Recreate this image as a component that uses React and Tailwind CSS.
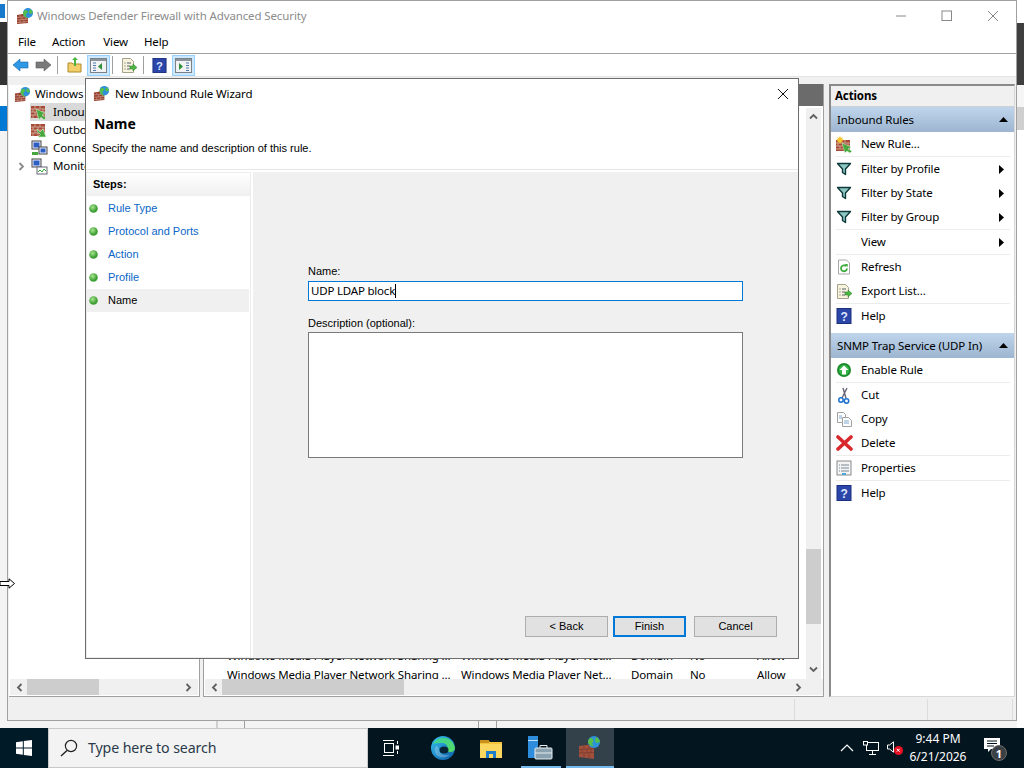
import React from "react";

const WallGlobe = ({ s = 18 }) => (
  <svg width={s} height={s} viewBox="0 0 18 18" className="shrink-0">
    <path d="M1 8l11-2v10l-11 1z" fill="#96412f" />
    <path d="M1 10.5l11-1M1 13l11-1M1 15.5l11-1M4 8v2M8 7v3M6 10v3M10 10v3M4 13v3M8 12v4" stroke="#c9907f" strokeWidth="0.8" />
    <circle cx="12" cy="6" r="5" fill="#2f8fdc" />
    <path d="M9 3c2 0 3 1 3 2s-2 1-2 3 1 2 2 3c-2 0-5-2-5-5 0-1 1-2 2-3zM14 2c1 1 3 2 3 4l-3 1-1-2z" fill="#52c04a" />
  </svg>
);
const WallArrow = ({ out }) => (
  <svg width="17" height="17" viewBox="0 0 17 17" className="shrink-0">
    <rect x="0" y="2" width="14" height="12" fill="#a64a36" />
    <path d="M0 5h14M0 8h14M0 11h14M4 2v3M9 2v3M2 5v3M7 5v3M12 5v3M4 8v3M9 8v3M2 11v3M7 11v3M12 11v3" stroke="#d9b7a6" strokeWidth="0.8" />
    {out ? (
      <path d="M6 7l3 3 3-3 3 8-8 0 2.500-2.500L6 9.500z" fill="#46a83c" stroke="#d7f0d0" strokeWidth="0.6" />
    ) : (
      <path d="M5 5l9 4-3 2 4 3-2 2-3-3-2 3z" fill="#46a83c" stroke="#d7f0d0" strokeWidth="0.6" />
    )}
  </svg>
);
const Computers = ({ chart }) => (
  <svg width="17" height="17" viewBox="0 0 17 17" className="shrink-0">
    <rect x="1" y="1" width="9" height="8" fill="#eef" stroke="#444" />
    <rect x="2.5" y="2.5" width="6" height="5" fill="#2c5fc4" />
    {chart ? (
      <>
        <rect x="6" y="9" width="10" height="7" fill="#fff" stroke="#667" />
        <path d="M7 14l2-2 2 2 2-3 2 2" stroke="#3aa63a" fill="none" />
      </>
    ) : (
      <>
        <rect x="8" y="7" width="8" height="7" fill="#eef" stroke="#444" />
        <rect x="9.5" y="8.5" width="5" height="4" fill="#2c5fc4" />
        <rect x="1" y="12" width="6" height="3" fill="#46a83c" />
      </>
    )}
  </svg>
);
const Funnel = () => (
  <svg width="16" height="16" viewBox="0 0 16 16" className="shrink-0">
    <path d="M1.500 2.500h13L9.500 8v5.500l-3-2V8z" fill="#8fc7c4" stroke="#0d3b3b" strokeWidth="1.4" strokeLinejoin="round" />
  </svg>
);
const HelpIcon = ({ s = 16 }) => (
  <svg width={s} height={s} viewBox="0 0 16 16" className="shrink-0">
    <rect x="1" y="0.5" width="14" height="15" fill="#2b46a8" stroke="#1c2f7d" />
    <text x="8" y="12.5" textAnchor="middle" fontSize="12" fontWeight="700" fontFamily="Liberation Sans" fill="#dfe7ff">?</text>
  </svg>
);
const ExportIcon = () => (
  <svg width="17" height="17" viewBox="0 0 17 17" className="shrink-0">
    <path d="M1.5 1.5h8l3 3v11h-11z" fill="#f7f3dc" stroke="#a6a28a" />
    <path d="M3.5 6h1M6 6h4M3.5 9h1M6 9h3M3.5 12h1M6 12h3" stroke="#55606d" />
    <path d="M9 9h3V7l4 3.5-4 3.5v-2H9z" fill="#4ab540" stroke="#2c7d2a" strokeWidth="0.5" />
  </svg>
);
const RefreshIcon = () => (
  <svg width="16" height="16" viewBox="0 0 16 16" className="shrink-0">
    <path d="M2.5 1h8l3 3v11h-11z" fill="#fff" stroke="#a8a8a8" />
    <path d="M11 9.5a3 3 0 1 1-1-2.4" fill="none" stroke="#3aaa3a" strokeWidth="1.8" />
    <path d="M8.5 5h3.2v3.2z" fill="#3aaa3a" />
  </svg>
);
const NewRuleIcon = () => (
  <svg width="17" height="17" viewBox="0 0 17 17" className="shrink-0">
    <rect x="0" y="4" width="14" height="11" fill="#a64a36" />
    <path d="M0 7h14M0 10h14M0 13h14M4 4v3M9 4v3M2 7v3M7 7v3M12 7v3M4 10v3M9 10v3" stroke="#d9b7a6" strokeWidth="0.8" />
    <path d="M4 0l1 2 2-1-1 2 2 1-2 1 1 2-2-1-1 2-1-2-2 1 1-2-2-1 2-1-1-2 2 1z" fill="#f4c431" />
    <path d="M6 7l9 4-3 2 4 2-2 2-3-2-2 2z" fill="#46a83c" stroke="#d7f0d0" strokeWidth="0.5" />
  </svg>
);
const EnableIcon = () => (
  <svg width="16" height="16" viewBox="0 0 16 16" className="shrink-0">
    <circle cx="8" cy="8" r="7" fill="#1b8a2b" />
    <circle cx="8" cy="8" r="5.2" fill="#37b34a" />
    <path d="M8 3.5L12.5 8H10v4.5H6V8H3.5z" fill="#fff" />
  </svg>
);
const CutIcon = () => (
  <svg width="16" height="17" viewBox="0 0 16 17" className="shrink-0">
    <path d="M11 1L6 11M7 1l3 10" stroke="#667" strokeWidth="1.4" fill="none" />
    <circle cx="5" cy="13" r="2.2" fill="none" stroke="#1c6fd0" strokeWidth="1.5" />
    <circle cx="10.5" cy="14" r="2.2" fill="none" stroke="#1c6fd0" strokeWidth="1.5" />
  </svg>
);
const CopyIcon = () => (
  <svg width="17" height="17" viewBox="0 0 17 17" className="shrink-0">
    <path d="M1.5 1.5h6l2 2v8h-8z" fill="#fff" stroke="#a0a0a0" />
    <path d="M6.5 6.5h6l3 3v6h-9z" fill="#fff" stroke="#a0a0a0" />
    <path d="M8 10h5M8 12h5M3 5h3M3 7h3" stroke="#7fa8d0" />
  </svg>
);
const DeleteIcon = () => (
  <svg width="17" height="16" viewBox="0 0 17 16" className="shrink-0">
    <path d="M2 2l13 12M15 2L2 14" stroke="#d8282c" strokeWidth="3.6" strokeLinecap="round" />
  </svg>
);
const PropsIcon = () => (
  <svg width="16" height="16" viewBox="0 0 16 16" className="shrink-0">
    <rect x="1" y="1" width="14" height="14" fill="#f4f4f4" stroke="#8a8a8a" />
    <path d="M3 5h1M5 5h8M3 8h1M5 8h8M3 11h1M5 11h8" stroke="#7b8794" />
    <rect x="6" y="13" width="4" height="2" fill="#4aa8e0" />
  </svg>
);
const ChevL = ({ c = "#606060" }) => (
  <svg width="9" height="9" viewBox="0 0 9 9"><path d="M6.5 1L3 4.5 6.5 8" fill="none" stroke={c} strokeWidth="1.8" /></svg>
);
const ChevR = ({ c = "#606060" }) => (
  <svg width="9" height="9" viewBox="0 0 9 9"><path d="M2.5 1L6 4.5 2.5 8" fill="none" stroke={c} strokeWidth="1.8" /></svg>
);
const ChevU = () => (
  <svg width="9" height="9" viewBox="0 0 9 9"><path d="M1 6.5L4.5 3 8 6.5" fill="none" stroke="#606060" strokeWidth="1.8" /></svg>
);
const ChevD = () => (
  <svg width="9" height="9" viewBox="0 0 9 9"><path d="M1 2.5L4.5 6 8 2.5" fill="none" stroke="#606060" strokeWidth="1.8" /></svg>
);
const TriR = () => (
  <svg width="5" height="9" viewBox="0 0 5 9"><path d="M0 0l5 4.5L0 9z" fill="#000" /></svg>
);
const TriU = () => (
  <svg width="9" height="5" viewBox="0 0 9 5"><path d="M0 5l4.5-5L9 5z" fill="#000" /></svg>
);

const Action = ({ icon, label, sub }) => (
  <div className="h-6 flex items-center text-black shrink-0">
    <div className="w-[30px] pl-[5px] flex items-center shrink-0">{icon}</div>
    <span className="-mt-px">{label}</span>
    {sub && <div className="ml-auto mr-[10px] flex"><TriR /></div>}
  </div>
);
const Sep = () => <div className="h-px bg-[#ececec] mx-[5px] w-[174px] shrink-0" />;
const ActHead = ({ label }) => (
  <div className="h-[25px] shrink-0 flex items-center pl-[6px] pr-[5px] bg-gradient-to-b from-[#bfd5ec] to-[#9db5d0] text-black">
    <span>{label}</span>
    <div className="ml-auto flex mr-[1px]"><TriU /></div>
  </div>
);
const TreeRow = ({ icon, label, arrow, pad = "pl-[22px]", w = "w-[22px]" }) => (
  <div className={`h-[18px] flex items-center ${pad}`}>
    {arrow && <div className="absolute left-[8px] flex"><ChevR c="#8a8a8a" /></div>}
    <div className={`${w} flex items-center shrink-0`}>{icon}</div>
    <span className="whitespace-nowrap">{label}</span>
  </div>
);
const ListRow = () => (
  <div className="h-[19px] flex items-center shrink-0 whitespace-nowrap text-black">
    <span className="w-[257px] pl-[23px] shrink-0">Windows Media Player Network Sharing ...</span>
    <span className="w-[170px] shrink-0">Windows Media Player Net...</span>
    <span className="w-[59px] shrink-0">Domain</span>
    <span className="w-[67px] shrink-0">No</span>
    <span>Allow</span>
  </div>
);
const TB = ({ children, active, ml = "" }) => (
  <div className={`h-[21px] w-[23px] shrink-0 flex items-center justify-center ${ml} ${active ? "bg-[#cce8ff] border border-[#99d1ff]" : ""}`}>{children}</div>
);
const TSep = () => <div className="w-px h-[18px] bg-[#a0a0a0] mx-[2px] shrink-0" />;
const Step = ({ label, on }) => (
  <div className={`h-[23px] flex items-center ${on ? "bg-[#f0f0f0] text-black" : "text-[#0a66c8]"}`}>
    <div className="w-[21px] pl-[2px] flex shrink-0">
      <svg width="9" height="9" viewBox="0 0 9 9"><defs><radialGradient id={`g${label[0]}${label.length}`} cx="0.4" cy="0.35"><stop offset="0" stopColor="#a8e690" /><stop offset="1" stopColor="#3f9f35" /></radialGradient></defs><circle cx="4.5" cy="4.5" r="4.3" fill={`url(#g${label[0]}${label.length})`} /></svg>
    </div>
    <span>{label}</span>
  </div>
);
const Btn = ({ label, w, focus }) => (
  <div className={`h-[21px] flex items-center justify-center bg-[#e1e1e1] text-black shrink-0 ${w} ${focus ? "border-2 border-[#0078d7]" : "border border-[#adadad]"}`}>{label}</div>
);

export default function App() {
  return (
    <div className="relative w-[1024px] h-[768px] overflow-hidden bg-white flex flex-col text-[11.5px] tracking-[-0.12px] leading-none font-['Noto_Sans','Open_Sans',sans-serif]">
      <div className="h-[728px] flex shrink-0">
        {/* desktop remnants left */}
        <div className="w-[7px] flex flex-col shrink-0">
          <div className="h-[22px] bg-white flex items-center"><div className="w-[5px] h-[14px] bg-[#1979ca]" /></div>
          <div className="h-[63px] bg-[#333333]" />
          <div className="h-[21px] bg-white" />
          <div className="h-[25px] bg-[#0078d4]" />
          <div className="flex-1 bg-[#f3f3f3]" />
        </div>

        <div className="w-[1010px] flex flex-col shrink-0">
          {/* window */}
          <div className="h-[721px] border border-[#a0a0a0] bg-white flex flex-col shrink-0">
            <div className="h-[29px] flex items-center pl-[8px] shrink-0">
              <WallGlobe />
              <span className="ml-[3px] text-[#8c8c8c]">Windows Defender Firewall with Advanced Security</span>
              <div className="ml-auto flex items-center text-[#767676]">
                <svg width="46" height="12" viewBox="0 0 46 12"><path d="M18 6h10" stroke="#888" /></svg>
                <svg width="46" height="12" viewBox="0 0 46 12"><rect x="18" y="1" width="9.5" height="9.5" fill="none" stroke="#888" /></svg>
                <svg width="46" height="12" viewBox="0 0 46 12"><path d="M18 1l10 10M28 1L18 11" stroke="#888" /></svg>
              </div>
            </div>
            <div className="h-[24px] flex items-center border-b border-[#a0a0a0] shrink-0 pl-[10px] gap-[16px] text-black">
              <span>File</span><span className="mr-[2px]">Action</span><span>View</span><span>Help</span>
            </div>
            <div className="h-[23px] flex items-center shrink-0 pl-px border-b border-[#e5e5e5]">
              <TB><svg width="17" height="14" viewBox="0 0 17 14"><path d="M1 7l7-6v3h8v6H8v3z" fill="#2f98e4" stroke="#1c66aa" strokeWidth="0.6" /></svg></TB>
              <TB><svg width="17" height="14" viewBox="0 0 17 14"><path d="M16 7L9 1v3H1v6h8v3z" fill="#7a7a7a" stroke="#5a5a5a" strokeWidth="0.6" /></svg></TB>
              <TSep />
              <TB ml="ml-[3px]"><svg width="15" height="16" viewBox="0 0 15 16"><path d="M1 6h4l1 1h8v8H1z" fill="#f2cf6a" stroke="#b08a2a" /><path d="M7 9V3H5l3-3 3 3H9v6z" fill="#4ab540" /></svg></TB>
              <TB active ml="ml-px"><svg width="17" height="15" viewBox="0 0 17 15"><rect x="0.5" y="0.5" width="16" height="14" fill="#f2f2f2" stroke="#7a8288" /><rect x="1" y="1" width="15" height="2" fill="#8a949c" /><path d="M3 5h3M3 7.5h3M3 10h3M3 12.5h3" stroke="#4a7ab0" /><path d="M12 5v7l-4-3.5z" fill="#2f8f3a" /></svg></TB>
              <TSep />
              <TB ml="ml-[3px]"><ExportIcon /></TB>
              <TSep />
              <TB ml="ml-[2px]"><HelpIcon s={15} /></TB>
              <TB active ml="ml-px"><svg width="17" height="15" viewBox="0 0 17 15"><rect x="0.5" y="0.5" width="16" height="14" fill="#f2f2f2" stroke="#7a8288" /><rect x="1" y="1" width="15" height="2" fill="#8a949c" /><path d="M11 5h3M11 7.5h3M11 10h3M11 12.5h3" stroke="#4a7ab0" /><path d="M4 5v7l4-3.5z" fill="#2f8f3a" /></svg></TB>
            </div>

            {/* panels */}
            <div className="h-[620px] flex bg-[#f0f0f0] shrink-0 pt-[7px] pl-px">
              {/* tree */}
              <div className="relative w-[191px] flex flex-col bg-white border-r border-b border-[#a0a0a0] shrink-0 overflow-hidden">
                <div className="h-[1px] bg-[#f0f0f0]" />
                <div className="flex-1 flex flex-col">
                  <TreeRow pad="pl-[5px]" w="w-[21px]" icon={<WallGlobe s={17} />} label="Windows Defender Firewall with Advan" />
                  <div className="relative h-[18px] flex items-center pl-[22px]">
                    <div className="absolute left-[21px] top-0 w-[80px] h-[18px] bg-[#d9d9d9]" />
                    <div className="relative w-[22px] flex shrink-0"><WallArrow /></div>
                    <span className="relative whitespace-nowrap">Inbound Rules</span>
                  </div>
                  <TreeRow icon={<WallArrow out />} label="Outbound Rules" />
                  <TreeRow icon={<Computers />} label="Connection Security Rules" />
                  <TreeRow arrow icon={<Computers chart />} label="Monitoring" />
                </div>
                <div className="h-[16px] mb-[1px] mx-px bg-[#f0f0f0] flex items-center justify-between px-[5px] relative shrink-0">
                  <ChevL />
                  <div className="absolute left-[17px] top-0 w-[72px] h-full bg-[#cdcdcd]" />
                  <ChevR />
                </div>
              </div>
              <div className="w-[3px] shrink-0" />
              {/* center */}
              <div className="w-[621px] flex flex-col bg-white border-l border-b border-r border-[#a0a0a0] shrink-0">
                <div className="h-[22px] bg-[#6b6b6b] shrink-0" />
                <div className="flex-1 flex min-h-0">
                  <div className="flex-1 flex flex-col justify-end overflow-hidden min-w-0">
                    <div className="-mb-[5px]">
                      <ListRow />
                      <ListRow />
                    </div>
                  </div>
                  <div className="w-[15px] mr-[2px] mt-[2px] bg-[#f0f0f0] flex flex-col items-center relative shrink-0">
                    <div className="mt-[4px] flex"><ChevU /></div>
                    <div className="absolute top-[441px] left-0 w-full h-[75px] bg-[#cdcdcd]" />
                    <div className="mt-auto mb-[5px] flex"><ChevD /></div>
                  </div>
                </div>
                <div className="h-[16px] mb-px bg-[#f0f0f0] flex items-center justify-between pl-[5px] pr-[20px] relative shrink-0 ml-px">
                  <ChevL />
                  <div className="absolute left-[17px] top-0 w-[182px] h-full bg-[#cdcdcd]" />
                  <ChevR />
                </div>
              </div>
              <div className="w-[5px] shrink-0" />
              {/* actions */}
              <div className="w-[186px] flex flex-col bg-white border-l-2 border-t-2 border-[#8a8a8a] shrink-0 border-b border-b-[#d8d8d8] border-r border-r-[#d8d8d8]">
                <div className="h-[21px] flex items-center pl-[4px] font-bold bg-[#f0f0f0] text-black shrink-0 border-b border-[#d0d0d0]">Actions</div>
                <ActHead label="Inbound Rules" />
                <Action icon={<NewRuleIcon />} label="New Rule..." />
                <Sep />
                <Action icon={<Funnel />} label="Filter by Profile" sub />
                <Action icon={<Funnel />} label="Filter by State" sub />
                <Action icon={<Funnel />} label="Filter by Group" sub />
                <Sep />
                <Action label="View" sub />
                <Sep />
                <Action icon={<RefreshIcon />} label="Refresh" />
                <Action icon={<ExportIcon />} label="Export List..." />
                <Sep />
                <Action icon={<HelpIcon />} label="Help" />
                <div className="h-[5px] shrink-0" />
                <ActHead label="SNMP Trap Service (UDP In)" />
                <Action icon={<EnableIcon />} label="Enable Rule" />
                <Sep />
                <Action icon={<CutIcon />} label="Cut" />
                <Action icon={<CopyIcon />} label="Copy" />
                <Action icon={<DeleteIcon />} label="Delete" />
                <Sep />
                <Action icon={<PropsIcon />} label="Properties" />
                <Sep />
                <Action icon={<HelpIcon />} label="Help" />
              </div>
            </div>

            {/* status bar */}
            <div className="flex-1 bg-[#f0f0f0] flex">
              <div className="w-[787px] border-r border-[#dcdcdc] mt-[2px]" />
              <div className="w-[133px] border-r border-[#dcdcdc] mt-[2px]" />
              <div className="w-[85px] border-r border-[#dcdcdc] mt-[2px]" />
            </div>
          </div>
          {/* strip of the window behind */}
          <div className="flex-1 bg-[#f3f3f3] flex">
            <div className="w-[211px] border-r-2 border-[#d0d0d0]" />
            <div className="w-[27px] border-r border-[#a0a0a0]" />
            <div className="w-[234px] border-r border-[#a0a0a0]" />
            <div className="w-[18px] border-r border-[#a0a0a0]" />
          </div>
        </div>

        {/* desktop remnants right */}
        <div className="flex-1 flex flex-col">
          <div className="h-[23px] bg-white" />
          <div className="h-[62px] bg-[#3f3f3f]" />
          <div className="h-[22px] bg-[#f5f5f5]" />
          <div className="h-[23px] bg-[#cfcfcf]" />
          <div className="flex-1 bg-white" />
        </div>
      </div>

      {/* taskbar */}
      <div className="h-[40px] bg-[#03151f] flex items-stretch shrink-0">
        <div className="w-[48px] bg-[#001a28] flex items-center justify-center">
          <svg width="16" height="16" viewBox="0 0 16 16"><path d="M0 2.2L6.8 1.2V7.6H0zM7.8 1L16 0V7.6H7.8zM0 8.4H6.8V14.8L0 13.8zM7.8 8.4H16V16L7.8 15z" fill="#fff" /></svg>
        </div>
        <div className="w-[320px] bg-[#f3f3f3] border border-[#c8c8c8] flex items-center pl-[11px] text-[14.2px] text-[#2a3a4a]">
          <svg width="18" height="18" viewBox="0 0 18 18"><circle cx="11" cy="7" r="5.6" fill="none" stroke="#222" strokeWidth="1.2" /><path d="M7 11.500L1 17" stroke="#222" strokeWidth="1.4" /></svg>
          <span className="ml-[10px]">Type here to search</span>
        </div>
        <div className="w-[51px] pr-[5px] flex items-center justify-center">
          <svg width="16" height="16" viewBox="0 0 16 16" fill="none" stroke="#fff"><path d="M0 .5h11M0 15.500h11" /><rect x="1.500" y="3.500" width="9" height="9" /><rect x="13" y="6" width="3" height="3" fill="#fff" /><path d="M14.500 1v3M14.500 11v3" /></svg>
        </div>
        <div className="w-[48px] flex items-center justify-center">
          <svg width="26" height="26" viewBox="0 0 26 26">
            <defs>
              <linearGradient id="e1" x1="0" y1="0" x2="1" y2="1"><stop offset="0" stopColor="#35c1f1" /><stop offset="1" stopColor="#0c59a4" /></linearGradient>
              <linearGradient id="e2" x1="0" y1="0" x2="1" y2="1"><stop offset="0" stopColor="#3bd0a0" /><stop offset="1" stopColor="#56dd60" /></linearGradient>
            </defs>
            <circle cx="13" cy="13" r="12" fill="url(#e1)" />
            <path d="M3 9C6 1 22-1 25 13c0 4-5 5-8 3 2-3 0-8-5-8-4 0-7 0-9 1z" fill="url(#e2)" />
            <path d="M9 14c0 4 4 7 8 6 1 0 2 0 3-.5-3 3.500-10 4-14 0-2-3-2-7 1-9z" fill="#fff" fillOpacity="0.25" />
            <ellipse cx="14" cy="15" rx="4.500" ry="3.600" fill="#03151f" fillOpacity="0.85" />
          </svg>
        </div>
        <div className="w-[48px] flex items-center justify-center">
          <svg width="22" height="19" viewBox="0 0 22 19"><path d="M0 1h8l2 2h12v16H0z" fill="#f2c43d" /><rect x="0" y="5" width="22" height="14" fill="#fbd75f" /><rect x="0" y="1" width="9" height="3" fill="#c8921c" /><path d="M6 19v-7h10v7h-3v-4H9v4z" fill="#1f7ecb" /></svg>
        </div>
        <div className="relative w-[48px] ml-px mr-[2px] flex items-center justify-center">
          <svg width="26" height="26" viewBox="0 0 26 26"><rect x="1" y="1" width="10" height="22" fill="#2d8ddc" /><rect x="1" y="5" width="10" height="1" fill="#bfe0f8" /><rect x="8" y="13" width="17" height="11" rx="1" fill="#8aa1b0" stroke="#e6eef2" /><path d="M13 13v-2.500h7V13" fill="none" stroke="#e6eef2" /><path d="M8 18h17" stroke="#e6eef2" /></svg>
          <div className="absolute bottom-0 left-[5px] right-[3px] h-[2px] bg-[#76b9ed]" />
        </div>
        <div className="relative w-[48px] bg-[#33414b] flex items-center justify-center">
          <svg width="26" height="26" viewBox="0 0 26 26"><path d="M2 11l15-2v15l-15-2z" fill="#a0503c" /><path d="M2 14.500l15-1M2 18l15-.5M7 10v4M12 10v4M5 14v4M10 14v4M14 14v4M7 18v4M12 18v5" stroke="#7c3a2a" strokeWidth="0.8" /><circle cx="17" cy="7" r="6" fill="#2d90dd" /><path d="M13 3c3 0 4 2 3 4s-1 3 1 4c-3 1-6-2-6-4 0-2 1-3 2-4zM19 2c2 1 4 3 4 5l-4 1-1-3z" fill="#55c14a" /></svg>
          <div className="absolute bottom-0 left-0 right-0 h-[2px] bg-[#76b9ed]" />
        </div>
        <div className="flex-1 flex items-center justify-end text-white tracking-normal">
          <svg width="14" height="8" viewBox="0 0 14 8" className="mr-[9px]"><path d="M1 7l6-6 6 6" fill="none" stroke="#fff" strokeWidth="1.2" /></svg>
          <svg width="16" height="14" viewBox="0 0 16 14" fill="none" stroke="#fff" className="mr-[8px]"><rect x="3.500" y="1.500" width="12" height="8" /><rect x="0.500" y="0.500" width="4" height="3.500" fill="#03151f" /><path d="M9.500 10v3M6 13.500h7" /></svg>
          <div className="relative w-[16px] h-[16px]">
            <svg width="9" height="12" viewBox="0 0 9 12" fill="none" stroke="#fff" className="absolute left-0 top-[1px]"><path d="M.5 4h2L6.500.8v10.400L2.500 8h-2z" /></svg>
            <svg width="9" height="9" viewBox="0 0 9 9" className="absolute left-[7px] top-[6px]"><circle cx="4.500" cy="4.500" r="4.500" fill="#e81123" /><path d="M2.800 2.800l2.900 2.900M5.700 2.800L2.800 5.700" stroke="#fff" /></svg>
          </div>
          <div className="w-[70px] flex flex-col items-center gap-[6px] mr-[11px] text-[12px]">
            <span>9:44 PM</span>
            <span>6/21/2026</span>
          </div>
          <div className="relative w-[20px] h-[24px] mr-[20px]">
            <svg width="16" height="15" viewBox="0 0 16 15" className="absolute left-0 top-[2px]"><path d="M0 0h16v11H7l-3 3v-3H0z" fill="#fff" /><path d="M3 3h10M3 5.500h10M3 8h7" stroke="#03151f" /></svg>
            <div className="absolute left-[7px] top-[9px] w-[16px] h-[16px] rounded-full bg-[#3b4045] border border-[#6b6b6b] flex items-center justify-center text-[11px] font-bold">1</div>
          </div>
        </div>
      </div>

      {/* resize cursor */}
      <svg width="16" height="11" viewBox="0 0 16 11" className="absolute left-0 top-[578px]">
        <path d="M0 3.500h9V.8l5.500 4.700L9 10.200V7.500H0z" fill="#fff" stroke="#000" />
      </svg>

      {/* wizard dialog */}
      <div className="absolute left-[85px] top-[78px] w-[714px] h-[581px] bg-white border border-[#6d6d6d] flex flex-col">
        <div className="h-[30px] flex items-center pl-[7px] pr-[9px] pb-px shrink-0">
          <WallGlobe s={17} />
          <span className="ml-[5px] text-black">New Inbound Rule Wizard</span>
          <svg width="12" height="12" viewBox="0 0 12 12" className="ml-auto"><path d="M1 1l10 10M11 1L1 11" stroke="#111" /></svg>
        </div>
        <div className="h-[61px] shrink-0 pl-[6px] text-black border-b border-[#e6e6e6]">
          <div className="pt-[8px] pl-[2px] font-bold text-[14px] h-[32px] tracking-normal">Name</div>
          <div className="pt-[2px] font-['Liberation_Sans',sans-serif] text-[11px] tracking-normal">Specify the name and description of this rule.</div>
        </div>
        <div className="flex-1 flex min-h-0 mt-[2px] font-['Liberation_Sans',sans-serif] text-[11px] tracking-normal">
          <div className="w-[165px] shrink-0 flex flex-col border border-[#ececec] mr-[2px] bg-white">
            <div className="h-[23px] shrink-0 flex items-center pl-[6px] font-bold text-black bg-gradient-to-b from-white to-[#f0f0f0]">Steps:</div>
            <div className="pt-px flex flex-col w-[162px]">
              <Step label="Rule Type" />
              <Step label="Protocol and Ports" />
              <Step label="Action" />
              <Step label="Profile" />
              <Step label="Name" on />
            </div>
          </div>
          <div className="flex-1 min-w-0 bg-[#f0f0f0] flex flex-col pl-[55px] text-black">
            <div className="pt-[94px] h-[109px]">Name:</div>
            <div className="w-[435px] h-[20px] bg-white border border-[#0078d7] flex items-center pl-[2px] font-['Noto_Sans',sans-serif] text-[11.5px] tracking-[-0.2px]">
              <span>UDP LDAP block</span>
              <div className="w-px h-[14px] bg-black" />
            </div>
            <div className="pt-[17px] h-[31px]">Description (optional):</div>
            <div className="w-[435px] h-[126px] bg-white border border-[#7a7a7a]" />
            <div className="flex-1 flex items-end justify-end pb-[21px] w-[469px]">
              <Btn label="< Back" w="w-[83px]" />
              <div className="w-[5px] shrink-0" />
              <Btn label="Finish" w="w-[73px]" focus />
              <div className="w-[8px] shrink-0" />
              <Btn label="Cancel" w="w-[83px]" />
            </div>
          </div>
        </div>
      </div>
    </div>
  );
}
